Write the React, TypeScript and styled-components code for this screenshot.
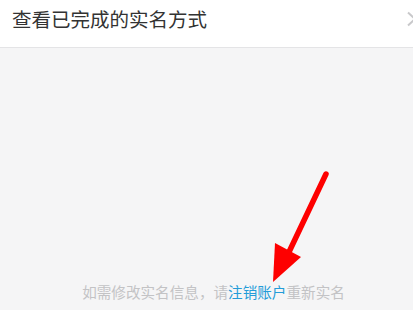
import styled, { createGlobalStyle } from "styled-components";

const GlobalStyle = createGlobalStyle`
  html, body {
    margin: 0;
    padding: 0;
    background: #f5f5f6;
    overflow: hidden;
  }
  #root {
    height: 310px;
  }
`;

function App() {
  return (
    <>
      <GlobalStyle />
      <Page>
        <Row>
          <RowTitle>查看已完成的实名方式</RowTitle>
          <Chevron viewBox="0 0 14 16" aria-hidden="true">
            <path d="M3 1.5 L10 8 L3 14.5" />
          </Chevron>
        </Row>
        <Body>
          <Note>
            如需修改实名信息，请<NoteLink>注销账户</NoteLink>重新实名
          </Note>
          <Arrow viewBox="0 0 413 310" aria-hidden="true">
            <line x1="326" y1="174" x2="289" y2="252" />
            <polygon points="275,243 301,257 273,282" />
          </Arrow>
        </Body>
      </Page>
    </>
  );
}
export default App;

const Page = styled.div`
  position: relative;
  display: flex;
  flex-direction: column;
  height: 310px;
  font-family: "Noto Sans CJK SC", "Noto Sans", sans-serif;
`;
const Row = styled.div`
  display: flex;
  align-items: center;
  justify-content: space-between;
  height: 47px;
  padding: 0 0 0 12px;
  background: #fff;
  border-bottom: 1px solid #e4e4e6;
  box-sizing: content-box;
`;
const RowTitle = styled.span`
  margin-top: -10px;
  font-size: 19.5px;
  line-height: 26px;
  color: #333;
`;
const Chevron = styled.svg`
  width: 14px;
  height: 16px;
  margin-top: -10px;
  margin-right: -6px;
  fill: none;
  stroke: #c9c9cb;
  stroke-width: 2;
`;
const Body = styled.div`
  flex: 1;
  display: flex;
  flex-direction: column;
  justify-content: flex-end;
  align-items: center;
  padding-bottom: 8px;
`;
const Note = styled.p`
  margin: 0;
  padding-left: 14px;
  font-size: 14.6px;
  line-height: 20px;
  color: #c3c3c5;
`;
const NoteLink = styled.span`
  color: #239cd8;
`;
const Arrow = styled.svg`
  position: absolute;
  left: 0;
  top: 0;
  width: 413px;
  height: 310px;
  pointer-events: none;
  line {
    stroke: #fe0000;
    stroke-width: 5.5;
    stroke-linecap: round;
  }
  polygon {
    fill: #fe0000;
  }
`;
